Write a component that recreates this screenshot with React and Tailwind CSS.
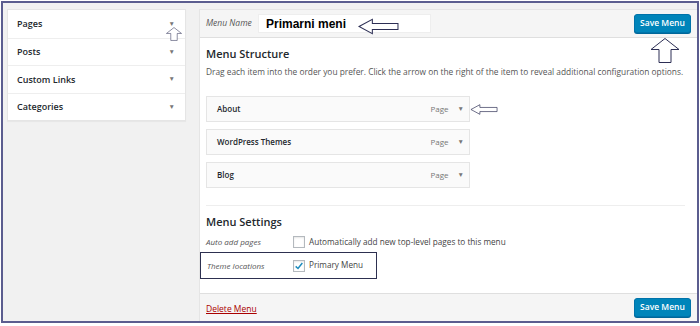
const SOURCES = ["Pages", "Posts", "Custom Links", "Categories"];
const ITEMS = ["About", "WordPress Themes", "Blog"];

function Caret({ className = "" }) {
    return <span className={`text-[6.5px] text-[#777] ${className}`}>▼</span>;
}

// hollow hand-drawn style arrows from the annotated screenshot
function ArrowLeft({ className }) {
    return (
        <svg className={className} viewBox="0 0 40 16" fill="none">
            <polygon
                points="1,8 14,1 14,5 39,5 39,11 14,11 14,15"
                fill="white"
                stroke="#2d2f55"
                strokeWidth="1"
            />
        </svg>
    );
}

function ArrowUp({ className }) {
    return (
        <svg className={className} viewBox="0 0 30 26" fill="none">
            <polygon
                points="15,1 29,12 21,12 21,25 9,25 9,12 1,12"
                fill="white"
                stroke="#2d2f55"
                strokeWidth="1"
            />
        </svg>
    );
}

function SaveButton() {
    return (
        <button
            type="button"
            className="h-[19px] w-[57px] rounded-[3px] bg-[#0085ba] border border-[#0073aa] text-[8.5px] font-semibold text-white shadow-[0_1px_0_#006799]"
        >
            Save Menu
        </button>
    );
}

function Checkbox({ checked }) {
    return (
        <span className="w-[12px] h-[12px] shrink-0 border border-[#b4b9be] bg-white shadow-[inset_0_1px_2px_rgba(0,0,0,0.1)] flex items-center justify-center">
            {checked && (
                <svg viewBox="0 0 12 12" className="w-[10px] h-[10px]">
                    <path d="M2 6.5 L4.8 9 L10 2.5" stroke="#1e8cbe" strokeWidth="1.8" fill="none" />
                </svg>
            )}
        </span>
    );
}

export default function App() {
    return (
        <div
            className="w-[700px] h-[326px] bg-white pt-[1px] pl-[1px] pr-[1px] pb-[3px] text-[#23282d]"
            style={{ fontFamily: '"Open Sans", "Noto Sans", sans-serif' }}
        >
            <div className="relative h-full border-2 border-[#5b5d8f] bg-[#f1f1f1] flex gap-[13px] pl-[4px] pt-[6px]">
                {/* left: add menu items */}
                <div className="w-[179px] self-start bg-white border border-[#e5e5e5] shadow-[0_1px_1px_rgba(0,0,0,0.04)]">
                    {SOURCES.map((s, i) => (
                        <div
                            key={s}
                            className={`h-[27.5px] flex items-center justify-between pl-[9px] pr-[10px] ${i > 0 ? "border-t border-[#eee]" : ""}`}
                        >
                            <span className="text-[9px] font-semibold">{s}</span>
                            <Caret />
                        </div>
                    ))}
                </div>

                {/* right: menu editor */}
                <div className="flex-1 flex flex-col bg-white border border-[#e5e5e5] border-r-0 border-b-0">
                    <div className="h-[28px] shrink-0 bg-[#f5f5f5] border-b border-[#dfdfdf] flex items-center pl-[6px] pr-[6px]">
                        <span className="text-[8.5px] italic text-[#555] w-[52px]">Menu Name</span>
                        <div className="h-[19px] w-[173px] bg-white border border-[#eee] flex items-center pl-[7px]">
                            <span
                                className="text-[12px] font-bold text-black"
                                style={{ fontFamily: '"Liberation Sans", Arial, sans-serif' }}
                            >
                                Primarni meni
                            </span>
                        </div>
                        <div className="flex-1" />
                        <SaveButton />
                    </div>

                    <div className="flex-1 px-[6px] pt-[8px]">
                        <h3 className="text-[11px] font-semibold leading-[16px]">Menu Structure</h3>
                        <p className="text-[8.35px] text-[#555] mt-[4px] leading-[11px] whitespace-nowrap">
                            Drag each item into the order you prefer. Click the arrow on the right of the item to reveal additional configuration options.
                        </p>
                        <div className="mt-[19px] flex flex-col gap-[7px] w-[264px]">
                            {ITEMS.map((it) => (
                                <div
                                    key={it}
                                    className="h-[26px] bg-[#fafafa] border border-[#e5e5e5] flex items-center pl-[10px] pr-[5px]"
                                >
                                    <span className="text-[8px] font-semibold flex-1">{it}</span>
                                    <span className="text-[8px] text-[#777] mr-[9px]">Page</span>
                                    <Caret />
                                </div>
                            ))}
                        </div>
                        <div className="mt-[17px] border-t border-[#eee] mr-[6px]" />
                        <h3 className="text-[11px] font-semibold leading-[16px] mt-[8px]">Menu Settings</h3>
                        <div className="flex items-center mt-[4px] h-[16px]">
                            <span className="text-[8px] italic text-[#555] w-[87px]">Auto add pages</span>
                            <Checkbox />
                            <span className="text-[8.2px] text-[#444] ml-[4px]">
                                Automatically add new top-level pages to this menu
                            </span>
                        </div>
                        <div className="flex items-center h-[27px] w-[177px] -ml-[6px] pl-[6px] mt-[2px] border border-[#2d3050]">
                            <span className="text-[8px] italic text-[#555] w-[86px]">Theme locations</span>
                            <Checkbox checked />
                            <span className="text-[8.2px] text-[#444] ml-[4px]">Primary Menu</span>
                        </div>
                    </div>

                    <div className="h-[28px] shrink-0 bg-[#f5f5f5] border-t border-[#dfdfdf] flex items-center justify-between pl-[6px] pr-[6px]">
                        <span className="text-[8.5px] text-[#a00] underline mt-[4px]">Delete Menu</span>
                        <SaveButton />
                    </div>
                </div>

                {/* annotation arrows */}
                <ArrowUp className="absolute left-[161px] top-[24px] w-[20px] h-[14px]" />
                <ArrowLeft className="absolute left-[355px] top-[15px] w-[41px] h-[17px]" />
                <ArrowUp className="absolute left-[647px] top-[34px] w-[30px] h-[27px]" />
                <ArrowLeft className="absolute left-[467px] top-[101px] w-[28px] h-[11px]" />
            </div>
        </div>
    );
}
